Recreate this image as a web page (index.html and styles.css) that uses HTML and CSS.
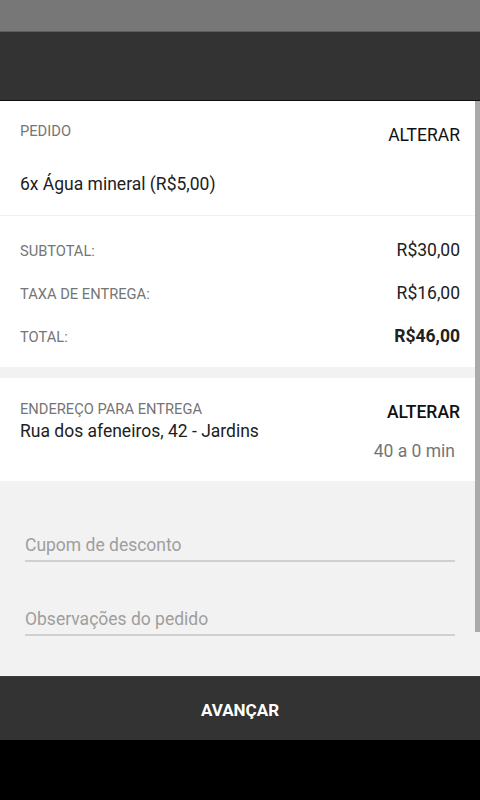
FILE: index.html
```html
<!DOCTYPE html>
<html lang="pt-BR">
<head>
	<meta charset="UTF-8">
	<meta name="viewport" content="width=device-width, initial-scale=1.0">
	<title>Pedido</title>
	<link rel="stylesheet" href="styles.css">
</head>
<body>
	<div class="status_bar"></div>
	<div class="toolbar"></div>
	<div class="content">
		<div class="section order">
			<div class="order_head">
				<span class="label">PEDIDO</span>
				<button class="link">ALTERAR</button>
			</div>
			<p class="item">6x Água mineral (R$5,00)</p>
		</div>
		<div class="section totals">
			<div class="total_row">
				<span class="label">SUBTOTAL:</span>
				<span class="value">R$30,00</span>
			</div>
			<div class="total_row">
				<span class="label">TAXA DE ENTREGA:</span>
				<span class="value">R$16,00</span>
			</div>
			<div class="total_row">
				<span class="label">TOTAL:</span>
				<span class="value strong">R$46,00</span>
			</div>
		</div>
		<div class="section address">
			<div class="address_info">
				<span class="label">ENDEREÇO PARA ENTREGA</span>
				<p class="item">Rua dos afeneiros, 42 - Jardins</p>
			</div>
			<div class="address_side">
				<button class="link medium">ALTERAR</button>
				<span class="eta">40 a 0 min</span>
			</div>
		</div>
		<div class="fields">
			<input class="field" type="text" placeholder="Cupom de desconto">
			<input class="field" type="text" placeholder="Observações do pedido">
		</div>
		<div class="scroll_thumb"></div>
	</div>
	<button class="next_button">AVANÇAR</button>
	<div class="nav_bar"></div>
</body>
</html>
```

FILE: styles.css
```css
* {
	margin: 0;
	padding: 0;
	box-sizing: border-box;
}
html, body {
	width: 100%;
	height: 100%;
}
body {
	display: flex;
	flex-direction: column;
	font-family: Roboto, "Noto Sans", sans-serif;
	color: #212121;
	line-height: 20px;
	overflow: hidden;
}

.status_bar {
	height: 32px;
	background: #777;
	border-bottom: 1px solid #5e5e5e;
}
.toolbar {
	height: 69px;
	background: #333;
	border-bottom: 1px solid #0d0d0d;
}

.content {
	flex: 1;
	position: relative;
	background: #f2f2f2;
}
.section {
	background: #FFF;
	padding: 0 20px;
}
.label {
	font-size: 14.7px;
	color: #757575;
}
.item {
	font-size: 17.5px;
}
.link {
	all: unset;
	font-size: 17.5px;
	line-height: 20px;
	color: #111;
}
.link.medium {
	font-weight: 500;
}

.order {
	padding-top: 20px;
	padding-bottom: 21px;
	border-bottom: 1px solid #f0f0f0;
}
.order_head {
	display: flex;
	justify-content: space-between;
	align-items: flex-start;
}
.order_head .link {
	margin-top: 4px;
}
.order .item {
	margin-top: 29px;
}

.totals {
	display: flex;
	flex-direction: column;
	gap: 22px;
	padding-top: 24px;
	padding-bottom: 20px;
}
.total_row {
	display: flex;
	justify-content: space-between;
	align-items: baseline;
}
.value {
	font-size: 17.5px;
}
.value.strong {
	font-weight: bold;
}

.address {
	margin-top: 11px;
	display: flex;
	justify-content: space-between;
	padding-top: 21px;
	padding-bottom: 20px;
}
.address_info {
	display: flex;
	flex-direction: column;
}
.address_info .item {
	margin-top: 2px;
}
.address_side {
	display: flex;
	flex-direction: column;
	align-items: flex-end;
}
.address_side .link {
	margin-top: 3px;
}
.eta {
	margin-top: 19px;
	margin-right: 5px;
	font-size: 17.5px;
	color: #757575;
}

.fields {
	display: flex;
	flex-direction: column;
	gap: 47px;
	padding: 54px 25px 0;
}
.field {
	all: unset;
	display: block;
	font-family: Roboto, "Noto Sans", sans-serif;
	font-size: 17.5px;
	line-height: 20px;
	height: 27px;
	padding-bottom: 5px;
	border-bottom: 2px solid #d0d0d0;
	box-sizing: border-box;
	color: #212121;
}
.field::placeholder {
	color: #9e9e9e;
}

.scroll_thumb {
	position: absolute;
	top: 0;
	right: 0;
	width: 5px;
	height: 531px;
	background: #aaa;
}

.next_button {
	all: unset;
	height: 64px;
	padding-top: 2px;
	box-sizing: border-box;
	display: flex;
	justify-content: center;
	align-items: center;
	background: #333;
	border-top: 1px solid #3c3c3c;
	color: #FFF;
	font-family: Roboto, "Noto Sans", sans-serif;
	font-size: 17px;
	font-weight: bold;
	line-height: 20px;
}
.nav_bar {
	height: 60px;
	background: #000;
}
```
